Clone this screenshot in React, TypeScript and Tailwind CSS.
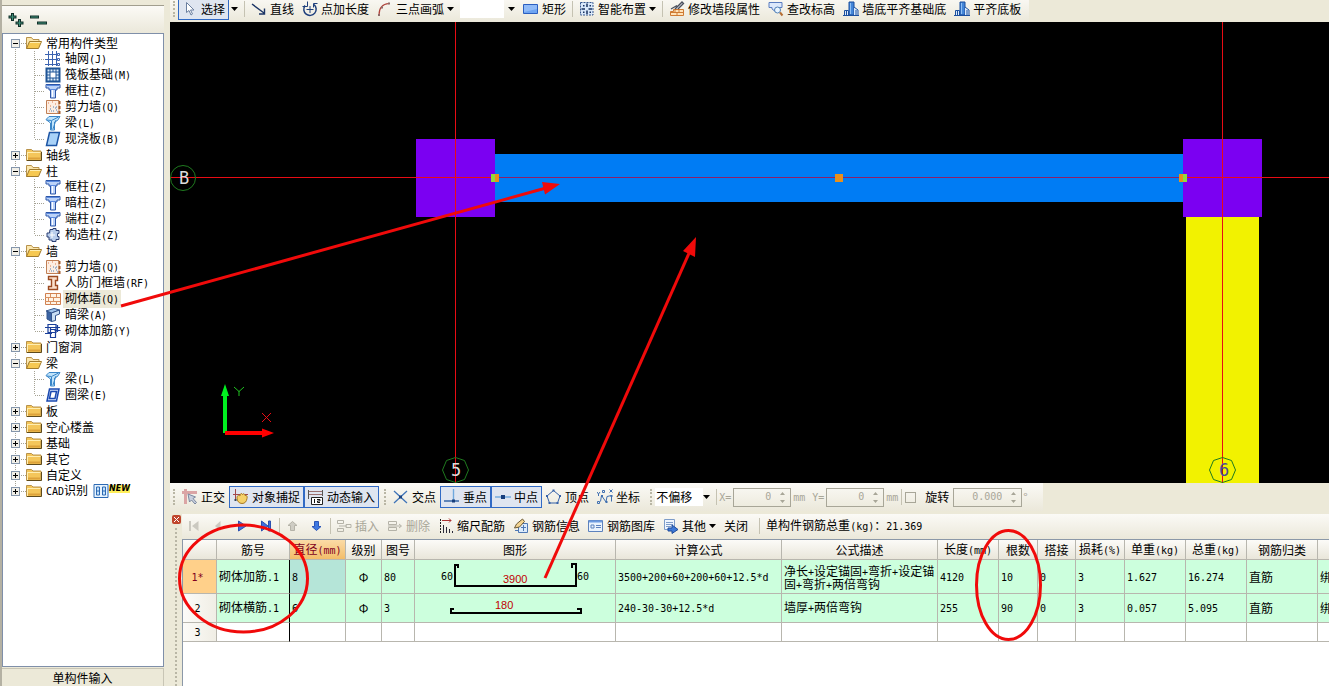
import React from "react";

type IconName = string;

function Label({ text }: { text: string }) {
  return (
    <span className="whitespace-nowrap">
      {text.split(/([!-~]+)/).map((part, i) =>
        i % 2 ? (
          <span key={i} className="font-['DejaVu_Sans_Mono',monospace] text-[10px]">
            {part}
          </span>
        ) : (
          part
        ),
      )}
    </span>
  );
}

const funnel = (
  <>
    <path d="M1 1.500h14v3.500h-3v2h-1.500v8h-5v-8H4V5H1z" fill="#bcd3f8" stroke="#2c56a8" />
    <path d="M2 2.500h12M5 6.500h6" stroke="#5c8be0" />
    <path d="M7.500 7v7" stroke="#fff" />
  </>
);

const bricksLevel = (
  <>
    <path d="M6 1h5v13H6z" fill="#4486d8" stroke="#1b4f9e" />
    <path d="M1.500 14.500v-5h4v5zM11 6l4 3v5.500h-4" fill="#d9e9fb" stroke="#1b4f9e" />
    <path d="M0 14.500h16M3.500 10v4M13 9v5" stroke="#1b4f9e" />
    <path d="M7.500 2v11" stroke="#8fc0f5" />
  </>
);

const shearWall = (
  <>
    <path d="M1.500 1.500h12.500v13h-12.500z" fill="#fdeee2" stroke="#c07f55" />
    <path d="M14.500 2v3M14.500 7v3M14.500 12v3" stroke="#a65c2c" strokeWidth="2" />
    <path d="M3 4h1M7 3h1M10 5h1M5 7h1M4 12h1" stroke="#e07a50" />
    <path d="M5 10h1M8 8h1M8 12h1M11 11h1M10 9h1M6 12h1M12 13h1M11 8h1" stroke="#4d7fb5" />
  </>
);

const beam = (
  <>
    <path d="M1 4.500L4 1.500h11l-2.500 4-3 1.500v8h-4V8z" fill="#bfe3fa" stroke="#3a86c8" />
    <path d="M1.500 5l5 .5 7-3.500M6.500 6v8.500M8 14l3-9" stroke="#3a86c8" fill="none" />
  </>
);

const icons: Record<IconName, React.ReactNode> = {
  axis: (
    <>
      <path d="M0 3.500h12M0 8.500h12M0 13.500h12M3.500 0v15M7.500 0v15M11.500 0v15" stroke="#3c63b0" />
      <path d="M12.500 2.500h2v2h-2zM12.500 7.500h2v2h-2zM12.500 12.500h2v2h-2z" stroke="#3c63b0" />
    </>
  ),
  raft: (
    <>
      <path d="M1.500 1.500h13v13h-13z" fill="#dcecfb" stroke="#1f5496" strokeWidth="2" />
      <path d="M5 5h6v6H5z" fill="#fff" stroke="#1f5496" />
      <path d="M5 2v3M8 2v3M11 2v3M5 11v3M8 11v3M11 11v3M2 5h3M2 8h3M2 11h3M11 5h3M11 8h3M11 11h3" stroke="#1f5496" />
    </>
  ),
  column: funnel,
  shear: shearWall,
  beam,
  slab: <path d="M4.500 1.500h10l-3 13h-10z" fill="#a9d2f8" stroke="#1d55a5" strokeWidth="1.500" />,
  structCol: (
    <>
      <path d="M5 2.500h3v-1h3v2h3v3h-1.500v3H14v3h-3v2H7v-1.500H4v-3H2v-4h2.500z" fill="#b9cdec" stroke="#2b3f73" />
      <path d="M7 5v6M5 8h5" stroke="#fff" />
    </>
  ),
  rf: <path d="M3.500 1.500h9v4h-2v5h2v4h-9v-3h3v-7h-3z" fill="#fbe0cc" stroke="#9c4a20" strokeWidth="1.400" />,
  brick: (
    <>
      <path d="M.5 2.500h15v11H.5z" fill="#fff3e6" stroke="#d08050" />
      <path d="M0 6.500h15M0 10.500h15M5.500 3v3M11.500 3v3M8.500 7v3M3.500 7v3M5.500 11v3M11.500 11v3" stroke="#d89060" />
    </>
  ),
  hidden: (
    <>
      <path d="M1 4l8-2.500 5.500 1.500-8 3z" fill="#9dc2ea" stroke="#33548c" />
      <path d="M6.500 6v8.500L2 12V4.500z" fill="#3b64a4" stroke="#33548c" />
      <path d="M6.500 6l8-3v4l-4 1.500v5l-4 1z" fill="#c8def4" stroke="#33548c" />
    </>
  ),
  rebar: <path d="M0 4.500h11M3 1.500h8v8H3zM0 10.500h7M5.500 4v10M12.500 2v7M9.500 7.500h6M5.500 6.500h5v8h-5zM11 4.500h4" stroke="#1a3f9a" strokeWidth="1.200" />,
  ring: <path d="M4.500 2h9.500l-2.500 12H2zM6 4.500L4.500 11.500h5.500l1.500-7z" fill="#dbe8ff" stroke="#1b49b0" strokeWidth="1.500" />,
  cad: (
    <>
      <path d="M1 1.500h14v13H1z" fill="#e8f4ff" stroke="#2d6ab4" />
      <path d="M3.500 4h3v8h-3zM9.500 4h3v8h-3zM3.500 8h3M9.500 8h3" fill="#c6e2fa" stroke="#2d6ab4" />
    </>
  ),
  cursor: <path d="M4.500 1.500v10l2.500-2 2 4.500 1.500-1-2-4h3.500z" fill="#fff" stroke="#6b7f9f" />,
  line: <path d="M1 3l12 9M13.500 7.500v5.500H8" stroke="#1c3566" strokeWidth="1.400" fill="none" />,
  addLength: (
    <>
      <path d="M3 4.500A6.200 6.200 0 1 0 12 3.500" stroke="#1e3f7c" strokeWidth="1.500" fill="none" />
      <path d="M8 5v7M4.500 8.500h7" stroke="#1e3f7c" />
      <path d="M5.500 .5v5H.5M15.500 2.500h-4v4" stroke="#1e3f7c" fill="none" />
    </>
  ),
  arc: (
    <>
      <path d="M2 14C2 8 5 3 12 2.500" stroke="#b0443c" strokeWidth="1.200" fill="none" />
      <path d="M1 13h2v2H1zM4 5.500h2v2H4zM11 1.500h2v2h-2z" fill="#8e6a68" />
    </>
  ),
  rect: (
    <>
      <path d="M.5 3.500h14v9H.5z" fill="#6ea4f2" stroke="#2c5fc0" />
      <path d="M1 4h13v4l-13 3z" fill="#a9cbfa" opacity=".6" />
    </>
  ),
  smart: (
    <>
      <path d="M1.500 1.500h12.500v12.500H1.500z" fill="#d9e8fa" stroke="#34568f" strokeDasharray="2 1" />
      <path d="M8 2.500v3.500M8 9.500v3.500M2.500 8h3.500M9.500 8h3.500" stroke="#17305f" strokeWidth="1.500" />
      <path d="M4 4h1.500v1.500H4zM10.500 4H12v1.500h-1.500zM4 10.500h1.500V12H4zM10.500 10.500H12V12h-1.500z" fill="#17305f" />
    </>
  ),
  editWall: (
    <>
      <path d="M1.500 14.500v-4h3v-2h10v6z" fill="#ffe2b8" stroke="#cf7a32" />
      <path d="M2 11.500h12M6 8.500v3M10 8.500v3M8 11.500v3" stroke="#cf7a32" />
      <path d="M2 8l6-3.500M6 8l7-7 1.500 1.500L9 8" stroke="#4a4f5c" strokeWidth="1.300" fill="#d4d8e0" />
    </>
  ),
  checkHeight: (
    <>
      <path d="M1 1.500h13v5h-3v2L8 11 4 8V6.500H1z" fill="#dce8fb" stroke="#5a7cc0" />
      <circle cx="9.500" cy="9" r="3" fill="#eaf5ff" stroke="#5080b5" />
      <path d="M12 11.500l2.500 3" stroke="#b56e35" strokeWidth="2" />
    </>
  ),
  level: bricksLevel,
  ortho: (
    <>
      <path d="M0 3.500h15M3.500 0v15" stroke="#dba5a5" strokeWidth="3" />
      <path d="M6 5l1.500 8 2-2 3.500 4 1.500-1.500-3.500-4 2.500-1.500z" fill="#c9d0de" stroke="#7a879e" />
    </>
  ),
  snap: (
    <>
      <path d="M0 5.500h15M2.500 0v12" stroke="#a3484c" />
      <path d="M4 9c0-3 2-3 3-2 0-3 2-3 2.500-1.500 1-1.500 2.500-.5 2.500 1 2-.5 2.500 1 2 3-.5 3-2 5-5 5S4 12 4 9z" fill="#f5d169" stroke="#a97b25" />
      <path d="M1.500 10h2v2h-2z" fill="#345" />
    </>
  ),
  dynamic: (
    <>
      <path d="M0 2.500h15M0 5.500h15" stroke="#9a7070" />
      <path d="M.5 1v9M14.500 1v6" stroke="#555" />
      <path d="M3.500 8.500h11v7h-11z" fill="#fff" stroke="#222" />
      <path d="M6.500 10v4M9 10.500h3V12H9.500v1.500H12" stroke="#111" fill="none" />
    </>
  ),
  cross: (
    <>
      <path d="M1 2l13 12M14 2L1 14" stroke="#3f74b8" strokeWidth="1.300" />
      <path d="M6 6.500h3v3H6z" fill="#1d4480" />
    </>
  ),
  perp: (
    <>
      <path d="M9.500 0v12" stroke="#6fa8dd" strokeWidth="1.400" />
      <path d="M0 12h15" stroke="#2a5ca0" strokeWidth="1.400" />
      <path d="M8 10.500h3v3H8z" fill="#173e7c" />
    </>
  ),
  mid: (
    <>
      <path d="M0 8h16" stroke="#6fa8dd" strokeWidth="1.400" />
      <path d="M6 6h4v4H6z" fill="#173e7c" />
    </>
  ),
  vertex: (
    <>
      <path d="M7.500 1.500L14 7l-2.500 7h-8L1 7z" fill="none" stroke="#3561a8" />
      <path d="M6.500 .5h2v2h-2zM13 6h2v2h-2zM0 6h2v2H0zM2.500 13h2v2h-2zM10.500 13h2v2h-2z" fill="#3561a8" />
    </>
  ),
  coord: (
    <>
      <path d="M3.500 12.500l1-6 4.500 6.500 1-5.500 4.500-1v6" stroke="#3f6fb0" fill="none" />
      <path d="M0 3l1.500 2L3 3M1.500 5v2M.5 12.500h2v2h-2zM5.500 1.500h2v2h-2zM12.500 .5l3 3M15.500 .5l-3 3" stroke="#3f6fb0" fill="none" />
      <path d="M4 6h2v2H4zM8.500 12h2v2h-2zM13.500 6h2v2h-2z" fill="#3f6fb0" />
    </>
  ),
  insert: <path d="M1.500 2.500h6v3h-6zM1.500 10.500h6v3h-6zM3 8h5M10 6.500h5v3h-5zM8 8h3" stroke="#b5b3a8" fill="none" />,
  remove: <path d="M1.500 3.500h8v3h-8zM1.500 9.500h8v3h-8zM1 8h13M12 6l2.500 2-2.500 2" stroke="#b5b3a8" fill="none" />,
  scale: (
    <>
      <path d="M2.500 1v14" stroke="#222" strokeDasharray="2 1" />
      <path d="M4 2.500h9M11 .5l2 2-2 2" stroke="#a33" fill="none" />
      <path d="M5.500 7v8M8.500 9v6M11.500 11v4M14.500 13v2" stroke="#2a2a3a" />
    </>
  ),
  info: (
    <>
      <path d="M5.500 5.500h9v9h-9zM2 12.500h4M8 9.500h5M10.500 7v6" fill="#dcebfb" stroke="#4f78b4" />
      <path d="M1.500 10l2-4 6-5 2 2.500-5 5.500z" fill="#f3d491" stroke="#6b5a35" />
    </>
  ),
  library: (
    <>
      <path d="M.5 2.500h14v11H.5z" fill="#eaf3fd" stroke="#5d82bd" />
      <path d="M1 3.500h13" stroke="#6d9be0" strokeWidth="2" />
      <path d="M3 7h3v3H3zM8 7.500h5M8 9.500h5" stroke="#5d82bd" fill="none" />
    </>
  ),
  other: (
    <>
      <path d="M1.500 1.500h10v10h-10z" fill="#eef5fe" stroke="#7d9cc9" />
      <path d="M3 4.500h7M3 6.500h7M3 8.500h5" stroke="#7d9cc9" />
      <path d="M5 10h4V7l6 4.500-6 4V13H5z" fill="#3d78d6" stroke="#1f4b9a" />
    </>
  ),
  first: <path d="M3 3h2v10H3zM12.500 3v10L6 8z" fill="#cbc9c0" />,
  prev: <path d="M10.500 3v10L5 8z" fill="#cbc9c0" />,
  next: <path d="M4.500 3v10L12 8z" fill="#3f6fe0" stroke="#2a50b0" />,
  last: <path d="M3.500 3v10L10 8zM10.500 3h2v10h-2z" fill="#3f6fe0" stroke="#2a50b0" />,
  up: <path d="M7.500 3.500l4.500 4H9.500v5h-4v-5H3z" fill="#cfcdc4" stroke="#b5b3a8" />,
  down: <path d="M7.500 12.500l-4.500-4h2.500v-5h4v5H12z" fill="#3f78e0" stroke="#2a55b8" />,
};

function Icon({ name }: { name: IconName }) {
  return (
    <svg className="size-4 shrink-0" viewBox="0 0 16 16" fill="none" aria-hidden="true">
      {icons[name]}
    </svg>
  );
}

function Caret() {
  return (
    <svg className="h-1 w-[7px] shrink-0" viewBox="0 0 7 4" aria-hidden="true">
      <path d="M0 0h7L3.500 4z" fill="#000" />
    </svg>
  );
}

function Tool({ icon, text, active, disabled, caret }: { icon?: IconName; text: string; active?: boolean; disabled?: boolean; caret?: boolean }) {
  const tone = active ? "border-[#316ac5] bg-[#dfe5f0]" : "border-transparent";
  return (
    <button
      type="button"
      disabled={disabled}
      className={`flex h-[22px] shrink-0 items-center gap-[3px] border px-[3px] ${tone} ${disabled ? "text-[#a8a698]" : "text-black"}`}
    >
      {icon && <Icon name={icon} />}
      <Label text={text} />
      {caret && <Caret />}
    </button>
  );
}

function NavButton({ icon, title }: { icon: IconName; title: string }) {
  return (
    <button type="button" aria-label={title} className="flex h-[22px] w-6 shrink-0 items-center justify-center">
      <Icon name={icon} />
    </button>
  );
}

function Sep({ tight }: { tight?: boolean }) {
  return <span className={`h-4 w-px shrink-0 bg-[#c5c2b2] ${tight ? "mx-px" : "mx-[2px]"}`} />;
}

function Grip() {
  return <span className="mx-[3px] h-4 w-0 shrink-0 border-l-2 border-dotted border-[#b9b6a5]" />;
}

type Node = { text: string; icon?: IconName; open?: boolean; selected?: boolean; children?: Node[] };

const tree: Node[] = [
  {
    text: "常用构件类型",
    open: true,
    children: [
      { text: "轴网(J)", icon: "axis" },
      { text: "筏板基础(M)", icon: "raft" },
      { text: "框柱(Z)", icon: "column" },
      { text: "剪力墙(Q)", icon: "shear" },
      { text: "梁(L)", icon: "beam" },
      { text: "现浇板(B)", icon: "slab" },
    ],
  },
  { text: "轴线" },
  {
    text: "柱",
    open: true,
    children: [
      { text: "框柱(Z)", icon: "column" },
      { text: "暗柱(Z)", icon: "column" },
      { text: "端柱(Z)", icon: "column" },
      { text: "构造柱(Z)", icon: "structCol" },
    ],
  },
  {
    text: "墙",
    open: true,
    children: [
      { text: "剪力墙(Q)", icon: "shear" },
      { text: "人防门框墙(RF)", icon: "rf" },
      { text: "砌体墙(Q)", icon: "brick", selected: true },
      { text: "暗梁(A)", icon: "hidden" },
      { text: "砌体加筋(Y)", icon: "rebar" },
    ],
  },
  { text: "门窗洞" },
  {
    text: "梁",
    open: true,
    children: [
      { text: "梁(L)", icon: "beam" },
      { text: "圈梁(E)", icon: "ring" },
    ],
  },
  { text: "板" },
  { text: "空心楼盖" },
  { text: "基础" },
  { text: "其它" },
  { text: "自定义" },
  { text: "CAD识别", icon: "cad" },
];

function Folder({ open }: { open?: boolean }) {
  return (
    <svg className="size-4 shrink-0" viewBox="0 0 16 16" aria-hidden="true">
      {open ? (
        <>
          <path d="M.5 13.500v-11h5l1.500 2h6v3" fill="#fbe7ae" stroke="#b8924a" />
          <path d="M.5 13.500l3-7h12l-3 7z" fill="#f6c851" stroke="#a07a2c" />
          <path d="M4 7.500h10.500" stroke="#ffeeb0" />
        </>
      ) : (
        <>
          <path d="M.5 13.500v-11h5l1.500 1.500h8v9.500z" fill="#f4c65a" stroke="#b8924a" />
          <path d="M1 5.500h13.500M1.500 5v8" stroke="#ffeeb0" />
          <path d="M2 11.500h12" stroke="#dda23a" strokeWidth="2" />
          <path d="M1 13.500h14.500V5" stroke="#5e4a1c" fill="none" />
        </>
      )}
    </svg>
  );
}

function TreeItem({ node, first, last }: { node: Node; first: boolean; last: boolean }) {
  const kids = node.children ?? [];
  return (
    <li>
      <div className="flex h-4 items-center">
        <button type="button" aria-label={node.open ? "折叠" : "展开"} className="h-4 w-[23px] shrink-0">
          <svg width="23" height="16" viewBox="0 0 23 16" aria-hidden="true" shapeRendering="crispEdges">
            <path d={`M12.500 ${first ? 8 : 0}V${last ? 8 : 16}M12 8.500h11`} stroke="#a5a293" strokeDasharray="1 1" />
            <rect x="8.500" y="4.500" width="8" height="8" fill="#f1efe8" stroke="#8596ab" />
            <path d={node.open ? "M10 8.500h5" : "M10 8.500h5M12.500 6v5"} stroke="#000" />
          </svg>
        </button>
        <Folder open={node.open} />
        <span className="ml-1">
          <Label text={node.text} />
        </span>
        {node.icon && (
          <span className="ml-[5px] flex items-center">
            <Icon name={node.icon} />
            <span className="mb-1 bg-[#ffef5a] font-['DejaVu_Sans',sans-serif] text-[8px] leading-[8px] font-bold italic">NEW</span>
          </span>
        )}
      </div>
      {kids.length > 0 && (
        <ul>
          {kids.map((kid, i) => (
            <li key={kid.text} className="flex h-4 items-center">
              <svg className="shrink-0" width="42" height="16" viewBox="0 0 42 16" aria-hidden="true" shapeRendering="crispEdges">
                <path d={`M12.500 0V16M31.500 0V${i === kids.length - 1 ? 8 : 16}M32 8.500h9`} stroke="#a5a293" strokeDasharray="1 1" />
              </svg>
              <Icon name={kid.icon ?? ""} />
              <span className={`ml-[2px] px-[2px] leading-4 ${kid.selected ? "bg-[#ece9d8]" : ""}`}>
                <Label text={kid.text} />
              </span>
            </li>
          ))}
        </ul>
      )}
    </li>
  );
}

function Sidebar() {
  return (
    <aside className="flex w-[164px] shrink-0 flex-col border-l-2 border-[#b4b1a3]">
      <div className="h-[6px] border-b border-[#a19e8e]" />
      <div className="flex h-[27px] items-center gap-[6px] bg-linear-to-b from-[#fbfaf6] to-[#ebe8da] pl-[5px]">
        <button type="button" aria-label="全部展开">
          <svg width="17" height="16" viewBox="0 0 17 16" aria-hidden="true">
            <path d="M5.500 1v8M1.500 5h8M12.500 7v8M8.500 11h8" stroke="#12302a" strokeWidth="3" />
            <path d="M5.500 2v6M2.500 5h6M12.500 8v6M9.500 11h6" stroke="#3f8f78" />
          </svg>
        </button>
        <button type="button" aria-label="全部折叠">
          <svg width="17" height="16" viewBox="0 0 17 16" aria-hidden="true">
            <path d="M0 5h9M7 11h10" stroke="#12302a" strokeWidth="3" />
            <path d="M1 5h7M8 11h8" stroke="#3f8f78" />
          </svg>
        </button>
      </div>
      <nav className="flex-1 overflow-hidden border border-[#7f8fa9] bg-white pt-px">
        <ul>
          {tree.map((n, i) => (
            <TreeItem key={n.text} node={n} first={i === 0} last={i === tree.length - 1} />
          ))}
        </ul>
      </nav>
      <button type="button" className="mt-px h-[18px] shrink-0 border-t border-r border-[#c8c5b5] bg-[#ece9d8] pt-px leading-4">
        单构件输入
      </button>
    </aside>
  );
}

function Drawing() {
  const handles = [325, 669, 1013];
  return (
    <svg className="block h-full w-full" role="img" aria-label="墙体平面图">
      <rect x="246" y="117" width="79" height="78" fill="#7b00f2" />
      <rect x="1013" y="117" width="79" height="78" fill="#7b00f2" />
      <rect x="325" y="132" width="688" height="48" fill="#007cf4" />
      <rect x="1016" y="195" width="73" height="266" fill="#f2f200" />
      <g stroke="#e80c14" shapeRendering="crispEdges">
        <path d="M285.500 0v461" />
        <path d="M1052.500 0v461" />
        <path d="M0 155.500h325" />
        <path d="M1013 155.500h2000" />
      </g>
      <path d="M325 155.500h688" stroke="#8e1f68" shapeRendering="crispEdges" />
      {handles.map((x, i) => (
        <g key={x}>
          <rect x={x - 4} y="152" width="8" height="8" fill="#e8901c" />
          {i !== 1 && <rect x={i === 0 ? x - 4 : x} y="152" width="4" height="8" fill="#8fdc3c" />}
        </g>
      ))}
      <g fill="none" stroke="#1f7a1f">
        <circle cx="13" cy="156" r="12.500" />
        <path d="M285.500 435.500l9 3 4 9.500-4 9.500-9 3-9-3-4-9.500 4-9.500zM1052.500 435.500l9 3 4 9.500-4 9.500-9 3-9-3-4-9.500 4-9.500z" />
      </g>
      <g className="font-['DejaVu_Sans_Mono',monospace] text-[17px]" textAnchor="middle">
        <text x="14" y="162" fill="#dcdcdc">B</text>
        <text x="286" y="454" fill="#dcdcdc">5</text>
        <text x="1054" y="454" fill="#4a4a96">6</text>
      </g>
      <path d="M55 411v-38" stroke="#00f020" strokeWidth="4" />
      <path d="M55 362l4 12h-8z" fill="#00f020" />
      <path d="M55 411h38" stroke="#f00" strokeWidth="4" />
      <path d="M104 411l-12-4.500v9z" fill="#f00" />
      <path d="M64 365l5 4.500 5-4.500M69 369v5" stroke="#20c020" fill="none" />
      <path d="M92 391l9 9M101 391l-9 9" stroke="#e80c14" />
    </svg>
  );
}

function NumberBox({ id, value, width }: { id: string; value: string; width: string }) {
  return (
    <span className={`flex h-[19px] shrink-0 items-center border border-[#a8a698] ${width}`}>
      <input
        id={id}
        disabled
        defaultValue={value}
        className="min-w-0 flex-1 bg-transparent pr-2 text-right font-['DejaVu_Sans_Mono',monospace] text-[10px] text-[#a8a698]"
      />
      <svg className="mr-1 shrink-0" width="7" height="15" viewBox="0 0 7 15" aria-hidden="true">
        <path d="M1 5l2.500-3L6 5zM1 10l2.500 3L6 10z" fill="#a8a698" />
      </svg>
    </span>
  );
}

const columns: [string, string][] = [
  ["", "w-[34px]"],
  ["筋号", "w-[73px]"],
  ["直径(mm)", "w-[56px]"],
  ["级别", "w-[36px]"],
  ["图号", "w-[33px]"],
  ["图形", "w-[201px]"],
  ["计算公式", "w-[166px]"],
  ["公式描述", "w-[156px]"],
  ["长度(mm)", "w-[61px]"],
  ["根数", "w-[39px]"],
  ["搭接", "w-[38px]"],
  ["损耗(%)", "w-[49px]"],
  ["单重(kg)", "w-[61px]"],
  ["总重(kg)", "w-[61px]"],
  ["钢筋归类", "w-[71px]"],
  ["", "w-[61px]"],
];

function ShapeLong() {
  return (
    <svg width="200" height="33" className="block font-['DejaVu_Sans_Mono',monospace] text-[10px]">
      <path d="M43 8V5h-3v21h121V4h-4v4" fill="none" stroke="#000" strokeWidth="2" />
      <text x="26" y="20">60</text>
      <text x="162" y="20">60</text>
      <text x="88" y="23" fill="#c00000" className="font-['Liberation_Sans',sans-serif] text-[11px]">3900</text>
    </svg>
  );
}

function ShapeShort() {
  return (
    <svg width="200" height="28" className="block">
      <path d="M39 15h-3v4h130v-4h-4" fill="none" stroke="#000" strokeWidth="2" />
      <text x="80" y="15" fill="#c00000" className="font-['Liberation_Sans',sans-serif] text-[11px]">180</text>
    </svg>
  );
}

const rows: { head: string; height: string; cells: React.ReactNode[] }[] = [
  {
    head: "1*",
    height: "h-[34px]",
    cells: ["砌体加筋.1", "8", "Φ", "80", <ShapeLong />, "3500+200+60+200+60+12.5*d", ["净长+设定锚固+弯折+设定锚", "固+弯折+两倍弯钩"], "4120", "10", "0", "3", "1.627", "16.274", "直筋", "绑扎"],
  },
  {
    head: "2",
    height: "h-[29px]",
    cells: ["砌体横筋.1", "6", "Φ", "3", <ShapeShort />, "240-30-30+12.5*d", "墙厚+两倍弯钩", "255", "90", "0", "3", "0.057", "5.095", "直筋", "绑扎"],
  },
  { head: "3", height: "h-[19px]", cells: Array(15).fill("") },
];

function cellContent(c: React.ReactNode) {
  if (typeof c === "string") return <Label text={c} />;
  if (Array.isArray(c))
    return c.map((line) => (
      <span key={String(line)} className="block h-[13px] leading-[13px]">
        <Label text={String(line)} />
      </span>
    ));
  return c;
}

function RebarTable() {
  return (
    <table className="w-[1196px] table-fixed border-separate border-spacing-0">
      <thead>
        <tr className="h-5">
          {columns.map(([name, width], i) => (
            <th
              key={i}
              scope="col"
              className={`border-r border-b border-[#b8b6ae] p-0 text-center leading-4 font-normal ${width} ${
                i === 2 ? "bg-linear-to-b from-[#fbdba6] to-[#f3bd69] text-[#800020]" : "bg-linear-to-b from-[#fcfbf8] to-[#e9e6da]"
              }`}
            >
              <Label text={name} />
            </th>
          ))}
        </tr>
      </thead>
      <tbody>
        {rows.map((row, r) => (
          <tr key={row.head} className={row.height}>
            <th
              scope="row"
              className={`border-r border-b border-[#b8b6ae] p-0 pr-1 text-center leading-4 font-normal ${
                r === 0 ? "bg-[#ffd08a] text-[#800020]" : "bg-linear-to-r from-[#fcfbf8] to-[#f0eee5]"
              }`}
            >
              <Label text={row.head} />
            </th>
            {row.cells.map((c, i) => (
              <td
                key={i}
                className={`overflow-hidden border-r border-b p-0 leading-4 ${
                  i === 0 ? "border-r-black border-b-[#b8b6ae]" : "border-[#b8b6ae]"
                } ${i === 2 ? "text-center" : i === 4 ? "" : "pl-[2px]"} ${
                  r === 2 ? "bg-white" : r === 0 && i === 1 ? "bg-[#b5e5d8]" : "bg-[#ccffdd]"
                }`}
              >
                {cellContent(c)}
              </td>
            ))}
          </tr>
        ))}
      </tbody>
    </table>
  );
}

function Annotations() {
  return (
    <svg className="pointer-events-none absolute inset-0 h-full w-full" aria-hidden="true">
      <g fill="none" stroke="#f00a0a" strokeWidth="3">
        <path d="M121 306L546 188" />
        <path d="M545 578L690 251" />
        <ellipse cx="243.500" cy="578.500" rx="64" ry="53.500" />
        <ellipse cx="1008.500" cy="585" rx="32" ry="54.500" />
      </g>
      <path d="M560 184l-18-2 3 12.500zM696 237l-13 14 12 6z" fill="#f00a0a" />
    </svg>
  );
}

export default function App() {
  return (
    <div className="relative flex h-screen overflow-hidden bg-[#ece9d8] font-['Noto_Sans_CJK_SC',sans-serif] text-[12px] leading-4 text-black">
      <Sidebar />
      <main className="ml-[6px] flex min-w-0 flex-1 flex-col">
        <div className="h-[22px] shrink-0 overflow-hidden">
          <div className="-mt-1 flex h-[26px] w-fit items-center bg-linear-to-b from-[#fbfaf6] to-[#ebe8da] pr-1">
            <Grip />
            <Tool icon="cursor" text="选择" active />
            <button type="button" aria-label="选择方式" className="mr-1 ml-[2px]">
              <Caret />
            </button>
            <Sep />
            <Tool icon="line" text="直线" />
            <Tool icon="addLength" text="点加长度" />
            <Tool icon="arc" text="三点画弧" caret />
            <button type="button" aria-label="画弧参数" className="ml-[2px] flex h-[18px] w-[55px] shrink-0 items-center justify-end">
              <span className="mr-1 h-full flex-1 bg-white" />
              <Caret />
            </button>
            <span className="w-1" />
            <Tool icon="rect" text="矩形" />
            <Sep />
            <Tool icon="smart" text="智能布置" caret />
            <Sep />
            <Tool icon="editWall" text="修改墙段属性" />
            <Tool icon="checkHeight" text="查改标高" />
            <Tool icon="level" text="墙底平齐基础底" />
            <Tool icon="level" text="平齐底板" />
          </div>
        </div>

        <div className="min-h-0 flex-1 overflow-hidden bg-black">
          <Drawing />
        </div>

        <div className="flex h-[31px] shrink-0 items-center pb-[3px]">
          <div className="flex h-7 items-center bg-linear-to-b from-[#fbfaf6] to-[#ebe8da] pr-3">
            <Grip />
            <Tool icon="ortho" text="正交" />
            <Tool icon="snap" text="对象捕捉" active />
            <Tool icon="dynamic" text="动态输入" active />
            <span className="w-[2px]" />
            <Grip />
            <Tool icon="cross" text="交点" />
            <Tool icon="perp" text="垂点" active />
            <Tool icon="mid" text="中点" active />
            <Tool icon="vertex" text="顶点" />
            <Tool icon="coord" text="坐标" />
            <span className="w-[3px]" />
            <Grip />
            <span className="flex items-center">
              <select aria-label="偏移方式" className="h-[18px] w-12 appearance-none bg-white pl-px text-[12px] leading-4">
                <option>不偏移</option>
              </select>
              <Caret />
            </span>
            <span className="w-1" />
            <Sep />
            <label htmlFor="offset-x" className="mr-[2px] text-[#a8a698]">
              <Label text="X=" />
            </label>
            <NumberBox id="offset-x" value="0" width="w-[58px]" />
            <span className="mr-[7px] ml-[2px] text-[#a8a698]">
              <Label text="mm" />
            </span>
            <label htmlFor="offset-y" className="mr-[2px] text-[#a8a698]">
              <Label text="Y=" />
            </label>
            <NumberBox id="offset-y" value="0" width="w-[58px]" />
            <span className="mr-px ml-[2px] text-[#a8a698]">
              <Label text="mm" />
            </span>
            <Sep />
            <input id="rotate" type="checkbox" disabled className="mx-px size-[11px] appearance-none border border-[#a8a698]" />
            <label htmlFor="rotate" className="mr-1 ml-2">
              旋转
            </label>
            <NumberBox id="angle" value="0.000" width="w-[69px]" />
            <label htmlFor="angle" className="ml-px w-2 text-[#a8a698]">
              °
            </label>
          </div>
        </div>

        <div className="flex h-[172px] shrink-0">
          <div className="flex w-3 shrink-0 flex-col items-center">
            <button type="button" aria-label="关闭面板" className="mt-px flex size-[9px] items-center justify-center rounded-xs bg-[#c0452c]">
              <svg width="5" height="5" viewBox="0 0 5 5" aria-hidden="true">
                <path d="M0 0l5 5M5 0L0 5" stroke="#fff" />
              </svg>
            </button>
            <span className="mt-1 w-0 flex-1 border-l-2 border-dotted border-[#b9b6a5]" />
          </div>
          <div className="flex min-w-0 flex-1 flex-col">
            <div className="flex h-[25px] shrink-0 items-center bg-linear-to-b from-[#fbfaf6] to-[#ebe8da] pb-[2px]">
              <NavButton icon="first" title="第一条" />
              <NavButton icon="prev" title="上一条" />
              <NavButton icon="next" title="下一条" />
              <NavButton icon="last" title="最后一条" />
              <Sep tight />
              <NavButton icon="up" title="上移" />
              <NavButton icon="down" title="下移" />
              <Sep tight />
              <Tool icon="insert" text="插入" disabled />
              <Tool icon="remove" text="删除" disabled />
              <Tool icon="scale" text="缩尺配筋" />
              <Tool icon="info" text="钢筋信息" />
              <Tool icon="library" text="钢筋图库" />
              <Tool icon="other" text="其他" caret />
              <Tool text="关闭" />
              <span className="w-[5px]" />
              <Sep />
              <span className="ml-1">
                <Label text="单构件钢筋总重(kg)：21.369" />
              </span>
            </div>
            <div className="min-h-0 flex-1 overflow-hidden border-t border-l border-[#8b98a8] bg-white">
              <RebarTable />
            </div>
          </div>
        </div>
      </main>
      <Annotations />
    </div>
  );
}
